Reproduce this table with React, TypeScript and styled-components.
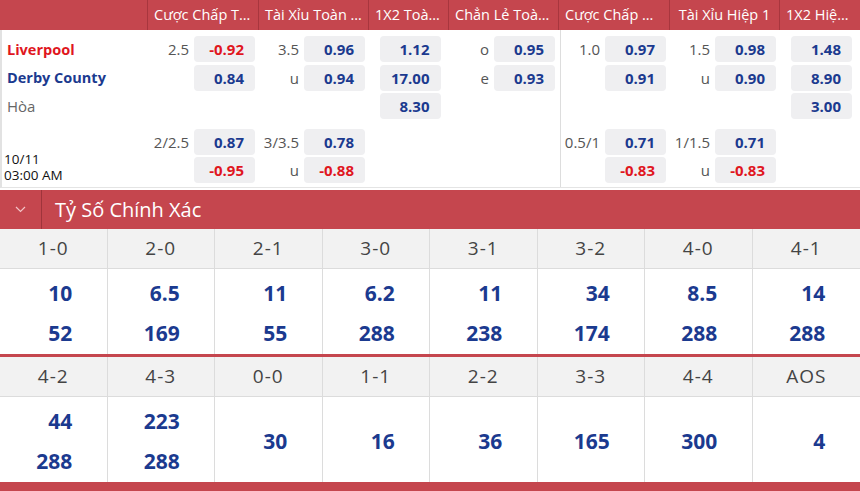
import styled, { createGlobalStyle } from "styled-components";

type Line = { label?: string; value?: string; neg?: boolean } | null;

type Market = {
  title: string;
  centered?: boolean;
  divider?: boolean;
  lines: Line[];
};

const markets: Market[] = [
  {
    title: "Cược Chấp Toàn Trận",
    lines: [
      { label: "2.5", value: "-0.92", neg: true },
      { value: "0.84" },
      null,
      { label: "2/2.5", value: "0.87" },
      { value: "-0.95", neg: true },
    ],
  },
  {
    title: "Tài Xỉu Toàn Trận",
    lines: [
      { label: "3.5", value: "0.96" },
      { label: "u", value: "0.94" },
      null,
      { label: "3/3.5", value: "0.78" },
      { label: "u", value: "-0.88", neg: true },
    ],
  },
  {
    title: "1X2 Toàn Trận",
    centered: true,
    lines: [{ value: "1.12" }, { value: "17.00" }, { value: "8.30" }, null, null],
  },
  {
    title: "Chẳn Lẻ Toàn Trận",
    lines: [{ label: "o", value: "0.95" }, { label: "e", value: "0.93" }, null, null, null],
  },
  {
    title: "Cược Chấp Hiệp 1",
    divider: true,
    lines: [
      { label: "1.0", value: "0.97" },
      { value: "0.91" },
      null,
      { label: "0.5/1", value: "0.71" },
      { value: "-0.83", neg: true },
    ],
  },
  {
    title: "Tài Xỉu Hiệp 1",
    lines: [
      { label: "1.5", value: "0.98" },
      { label: "u", value: "0.90" },
      null,
      { label: "1/1.5", value: "0.71" },
      { label: "u", value: "-0.83", neg: true },
    ],
  },
  {
    title: "1X2 Hiệp 1",
    centered: true,
    lines: [{ value: "1.48" }, { value: "8.90" }, { value: "3.00" }, null, null],
  },
];

const scoreGroups: { score: string; odds: string[] }[][] = [
  [
    { score: "1-0", odds: ["10", "52"] },
    { score: "2-0", odds: ["6.5", "169"] },
    { score: "2-1", odds: ["11", "55"] },
    { score: "3-0", odds: ["6.2", "288"] },
    { score: "3-1", odds: ["11", "238"] },
    { score: "3-2", odds: ["34", "174"] },
    { score: "4-0", odds: ["8.5", "288"] },
    { score: "4-1", odds: ["14", "288"] },
  ],
  [
    { score: "4-2", odds: ["44", "288"] },
    { score: "4-3", odds: ["223", "288"] },
    { score: "0-0", odds: ["30"] },
    { score: "1-1", odds: ["16"] },
    { score: "2-2", odds: ["36"] },
    { score: "3-3", odds: ["165"] },
    { score: "4-4", odds: ["300"] },
    { score: "AOS", odds: ["4"] },
  ],
];

const GlobalStyle = createGlobalStyle`
  body {
    margin: 0;
    background: #ffffff;
    font-family: "Open Sans", "Noto Sans", sans-serif;
  }
`;

const RED = "#c5464e";
const NAVY = "#1b3a8f";

const Page = styled.div`
  width: 860px;
  overflow: hidden;
`;

const COLUMNS = "147px 111px 110px 80px 110px 111px 110px 81px";

const MarketHeader = styled.div`
  display: grid;
  grid-template-columns: ${COLUMNS};
  height: 30px;
  background: ${RED};
`;

const HeaderCell = styled.div`
  border-left: 1px solid #a8363e;
  color: #ffffff;
  font-size: 14.5px;
  line-height: 29px;
  padding: 0 6px;
  text-align: center;
  white-space: nowrap;
  overflow: hidden;
  text-overflow: ellipsis;

  &:first-child {
    border-left: none;
  }
`;

const MarketBody = styled.div`
  display: grid;
  grid-template-columns: ${COLUMNS};
  border-left: 2px solid #e2e2e2;
  border-bottom: 1px solid #e4e4e4;
  margin-bottom: 2px;
`;

const TeamColumn = styled.div`
  display: flex;
  flex-direction: column;
  padding: 6px 0 3px;
`;

const TeamRow = styled.div<{ $color: string; $bold?: boolean }>`
  height: 26px;
  margin-bottom: 2.5px;
  display: flex;
  align-items: center;
  padding-left: 5px;
  font-size: ${(p) => (p.$bold ? "14.5px" : "15px")};
  font-weight: ${(p) => (p.$bold ? 700 : 400)};
  color: ${(p) => p.$color};
`;

const KickOff = styled.div`
  flex: 1;
  display: flex;
  flex-direction: column;
  justify-content: flex-end;
  padding-left: 2px;
  padding-bottom: 1px;
  font-size: 13.5px;
  line-height: 16px;
  color: #111111;
`;

const MarketColumn = styled.div<{ $divider?: boolean }>`
  display: flex;
  flex-direction: column;
  padding: 6px 0 1px;
  border-left: ${(p) => (p.$divider ? "1px solid #dddddd" : "none")};
`;

const OddsRow = styled.div<{ $centered?: boolean; $groupStart?: boolean }>`
  height: 26px;
  margin-bottom: 2.5px;
  margin-top: ${(p) => (p.$groupStart ? "7px" : "0")};
  display: flex;
  align-items: center;
  justify-content: ${(p) => (p.$centered ? "center" : "flex-end")};
  padding-right: ${(p) => (p.$centered ? "0" : "5px")};
  gap: 5px;
`;

const LineLabel = styled.span`
  font-size: 15px;
  color: #555555;
`;

const OddsBox = styled.span<{ $neg?: boolean }>`
  width: 61px;
  height: 26px;
  box-sizing: border-box;
  border-radius: 4px;
  background: #efeff1;
  padding-right: 11px;
  display: flex;
  align-items: center;
  justify-content: flex-end;
  font-size: 15px;
  font-weight: 700;
  color: ${(p) => (p.$neg ? "#e0161e" : NAVY)};
`;

const SectionHeader = styled.div`
  display: flex;
  align-items: stretch;
  height: 39px;
  background: ${RED};
  color: #ffffff;
`;

const ChevronBox = styled.div`
  width: 41px;
  border-right: 1px solid #9f343b;
  display: flex;
  align-items: center;
  justify-content: center;
`;

const SectionTitle = styled.div`
  display: flex;
  align-items: center;
  padding-left: 13px;
  font-size: 20px;
`;

const ScoreGroup = styled.div`
  display: grid;
  grid-template-columns: repeat(8, 1fr);
  border-bottom: 3px solid ${RED};
`;

const ScoreLabel = styled.div`
  height: 39px;
  background: #f2f2f2;
  border-right: 1px solid #dcdcdc;
  border-bottom: 1px solid #dcdcdc;
  display: flex;
  align-items: center;
  justify-content: center;
  font-size: 19px;
  color: #444444;
  letter-spacing: 1px;
  grid-row: 1;

  &:nth-child(8) {
    border-right: none;
  }
`;

const ScoreCell = styled.div`
  height: 85px;
  box-sizing: border-box;
  padding-top: 3px;
  border-right: 1px solid #dcdcdc;
  display: flex;
  align-items: center;
  justify-content: center;
  grid-row: 2;

  &:last-child {
    border-right: none;
  }
`;

const OddsStack = styled.div`
  width: 38px;
  display: flex;
  flex-direction: column;
  align-items: flex-end;
  font-size: 21px;
  font-weight: 700;
  line-height: 40px;
  color: ${NAVY};
`;

const Chevron = () => (
  <svg width="11" height="7" viewBox="0 0 11 7" fill="none">
    <path d="M1 1l4.5 4.5L10 1" stroke="#f3c4c7" strokeWidth="1.2" />
  </svg>
);

const App = () => {
  return (
    <Page>
      <GlobalStyle />
      <MarketHeader>
        <HeaderCell />
        {markets.map((m) => (
          <HeaderCell key={m.title}>{m.title}</HeaderCell>
        ))}
      </MarketHeader>
      <MarketBody>
        <TeamColumn>
          <TeamRow $color="#e0161e" $bold>
            Liverpool
          </TeamRow>
          <TeamRow $color={NAVY} $bold>
            Derby County
          </TeamRow>
          <TeamRow $color="#666666">Hòa</TeamRow>
          <KickOff>
            <span>10/11</span>
            <span>03:00 AM</span>
          </KickOff>
        </TeamColumn>
        {markets.map((m) => (
          <MarketColumn key={m.title} $divider={m.divider}>
            {m.lines.map((line, i) => (
              <OddsRow key={i} $centered={m.centered} $groupStart={i === 3}>
                {line?.label && <LineLabel>{line.label}</LineLabel>}
                {line?.value && <OddsBox $neg={line.neg}>{line.value}</OddsBox>}
              </OddsRow>
            ))}
          </MarketColumn>
        ))}
      </MarketBody>

      <SectionHeader>
        <ChevronBox>
          <Chevron />
        </ChevronBox>
        <SectionTitle>Tỷ Số Chính Xác</SectionTitle>
      </SectionHeader>

      {scoreGroups.map((group, g) => (
        <ScoreGroup key={g}>
          {group.map((s) => (
            <ScoreLabel key={s.score}>{s.score}</ScoreLabel>
          ))}
          {group.map((s) => (
            <ScoreCell key={s.score}>
              <OddsStack>
                {s.odds.map((o, i) => (
                  <span key={i}>{o}</span>
                ))}
              </OddsStack>
            </ScoreCell>
          ))}
        </ScoreGroup>
      ))}
      <SectionHeader />
    </Page>
  );
};

export default App;
